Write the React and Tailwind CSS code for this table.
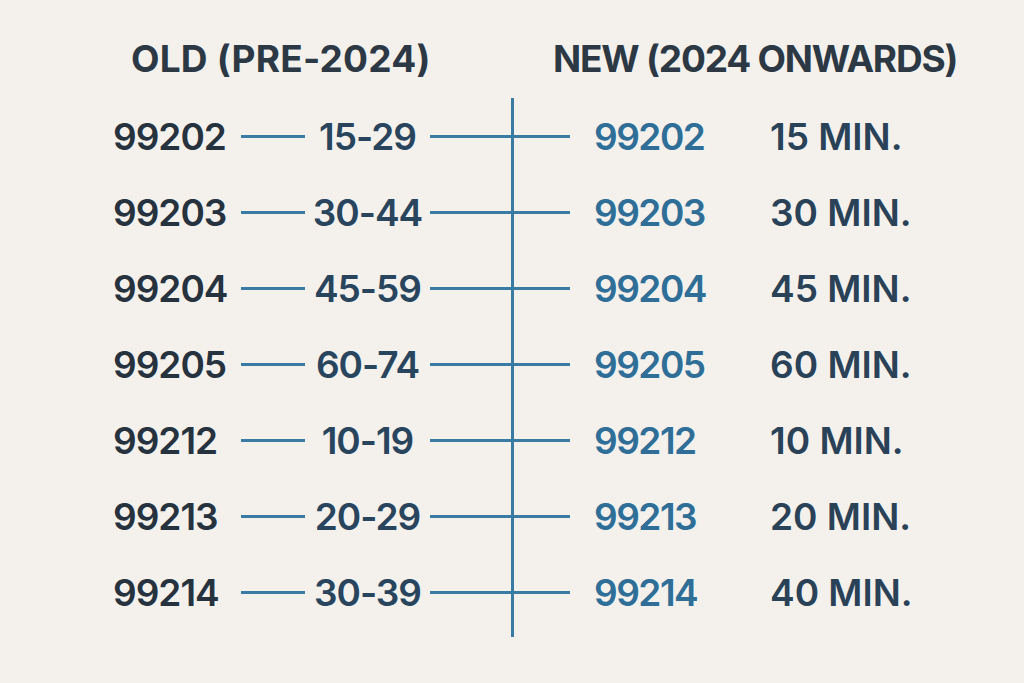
import React from "react";

// Tabla de conversión de códigos E/M: antes de 2024 vs. desde 2024.
const FILAS = [
  { viejo: "99202", rango: "15-29", nuevo: "99202", min: "15 MIN." },
  { viejo: "99203", rango: "30-44", nuevo: "99203", min: "30 MIN." },
  { viejo: "99204", rango: "45-59", nuevo: "99204", min: "45 MIN." },
  { viejo: "99205", rango: "60-74", nuevo: "99205", min: "60 MIN." },
  { viejo: "99212", rango: "10-19", nuevo: "99212", min: "10 MIN." },
  { viejo: "99213", rango: "20-29", nuevo: "99213", min: "20 MIN." },
  { viejo: "99214", rango: "30-39", nuevo: "99214", min: "40 MIN." },
];

const Linea = ({ className = "" }) => (
  <div className={`h-[3px] shrink-0 bg-[#3a7ba3] ${className}`} />
);

export default function App() {
  return (
    <div
      className="w-full h-[683px] bg-[#f4f1ed] overflow-hidden text-[37px] font-semibold leading-none whitespace-nowrap"
      style={{ fontFamily: "Inter, 'Noto Sans', sans-serif" }}
    >
      {/* encabezados */}
      <div className="flex pt-[40px] h-[98px] text-[#2c3945] font-bold">
        <div className="w-[512px] pl-[131px] tracking-[0.2px]">OLD (PRE-2024)</div>
        <div className="pl-[41px] tracking-[-1.2px]">NEW (2024 ONWARDS)</div>
      </div>

      <div className="flex">
        {/* columna izquierda */}
        <div className="w-[511px] shrink-0 flex flex-col">
          {FILAS.map((f) => (
            <div key={f.viejo} className="h-[76px] flex items-center">
              <div className="w-[241px] shrink-0 pl-[113px] text-[#27323f] tracking-[-1px]">{f.viejo}</div>
              <Linea className="w-[64px]" />
              <div className="w-[125px] shrink-0 text-center text-[#29455e] tracking-[-1px]">{f.rango}</div>
              <Linea className="flex-1" />
            </div>
          ))}
        </div>

        {/* eje vertical */}
        <div className="w-[3px] h-[539px] shrink-0 bg-[#3a7ba3]" />

        {/* columna derecha */}
        <div className="flex-1 flex flex-col">
          {FILAS.map((f) => (
            <div key={f.nuevo + f.min} className="h-[76px] flex items-center">
              <Linea className="w-[56px]" />
              <div className="w-[200px] shrink-0 pl-[24px] text-[#2e6e97] tracking-[-1.5px]">{f.nuevo}</div>
              <div className="text-[#2a4257]">{f.min}</div>
            </div>
          ))}
        </div>
      </div>
    </div>
  );
}
